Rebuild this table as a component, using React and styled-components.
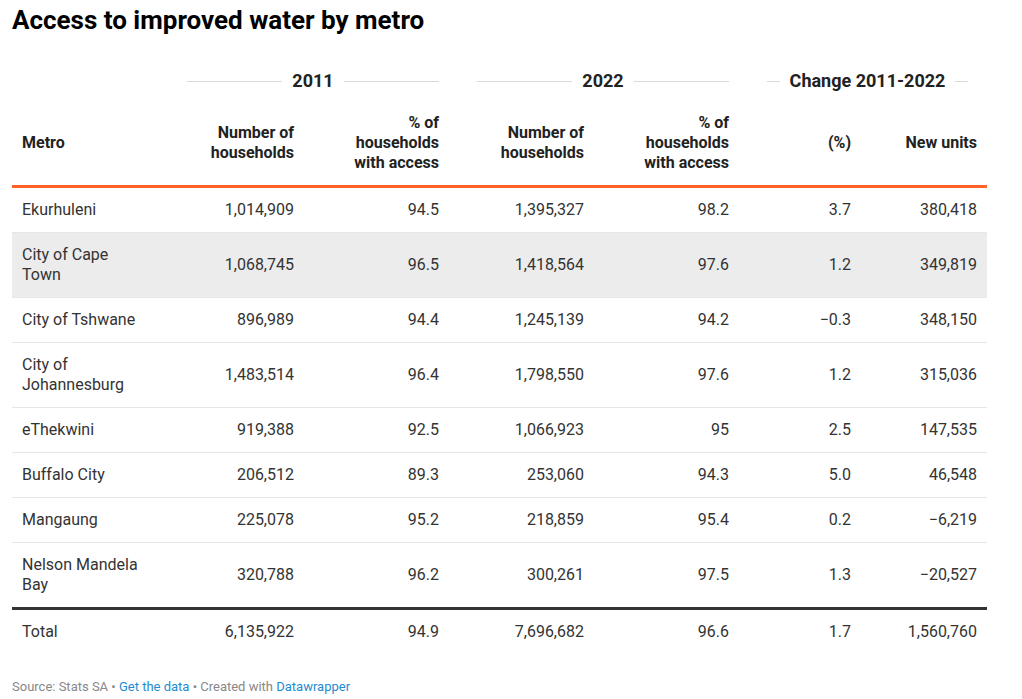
import styled, { createGlobalStyle } from "styled-components";

const GlobalStyle = createGlobalStyle`
  body {
    margin: 0;
    background: #fff;
    font-family: Roboto, "Liberation Sans", Arial, sans-serif;
  }
`;

const rows = [
  ["Ekurhuleni", "1,014,909", "94.5", "1,395,327", "98.2", "3.7", "380,418"],
  ["City of Cape Town", "1,068,745", "96.5", "1,418,564", "97.6", "1.2", "349,819", true],
  ["City of Tshwane", "896,989", "94.4", "1,245,139", "94.2", "−0.3", "348,150"],
  ["City of Johannesburg", "1,483,514", "96.4", "1,798,550", "97.6", "1.2", "315,036"],
  ["eThekwini", "919,388", "92.5", "1,066,923", "95", "2.5", "147,535"],
  ["Buffalo City", "206,512", "89.3", "253,060", "94.3", "5.0", "46,548"],
  ["Mangaung", "225,078", "95.2", "218,859", "95.4", "0.2", "−6,219"],
  ["Nelson Mandela Bay", "320,788", "96.2", "300,261", "97.5", "1.3", "−20,527"],
];

const names = {
  "City of Cape Town": ["City of Cape", "Town"],
  "City of Johannesburg": ["City of", "Johannesburg"],
  "Nelson Mandela Bay": ["Nelson Mandela", "Bay"],
};

const App = () => {
  return (
    <Page>
      <GlobalStyle />
      <Title>Access to improved water by metro</Title>
      <Table>
        <colgroup>
          <col style={{ width: 147 }} />
          <col style={{ width: 145 }} />
          <col style={{ width: 145 }} />
          <col style={{ width: 145 }} />
          <col style={{ width: 145 }} />
          <col style={{ width: 122 }} />
          <col style={{ width: 126 }} />
        </colgroup>
        <thead>
          <tr>
            <GroupCell />
            <GroupCell colSpan={2}>
              <Group>
                <Rule />
                <span>2011</span>
                <Rule />
              </Group>
            </GroupCell>
            <GroupCell colSpan={2}>
              <Group>
                <Rule />
                <span>2022</span>
                <Rule />
              </Group>
            </GroupCell>
            <GroupCell colSpan={2} $last>
              <Group>
                <Rule />
                <span>Change 2011-2022</span>
                <Rule />
              </Group>
            </GroupCell>
          </tr>
          <HeadRow>
            <HeadCell $left>Metro</HeadCell>
            <HeadCell>
              Number of
              <br />
              households
            </HeadCell>
            <HeadCell>
              % of
              <br />
              households
              <br />
              with access
            </HeadCell>
            <HeadCell>
              Number of
              <br />
              households
            </HeadCell>
            <HeadCell>
              % of
              <br />
              households
              <br />
              with access
            </HeadCell>
            <HeadCell>(%)</HeadCell>
            <HeadCell>New units</HeadCell>
          </HeadRow>
        </thead>
        <tbody>
          {rows.map((r) => (
            <Row key={r[0]} $hover={r[7]}>
              <Cell $left>
                {names[r[0]] ? (
                  <>
                    {names[r[0]][0]}
                    <br />
                    {names[r[0]][1]}
                  </>
                ) : (
                  r[0]
                )}
              </Cell>
              {r.slice(1, 7).map((v, i) => (
                <Cell key={i}>{v}</Cell>
              ))}
            </Row>
          ))}
        </tbody>
        <tfoot>
          <TotalRow>
            <Cell $left>Total</Cell>
            <Cell>6,135,922</Cell>
            <Cell>94.9</Cell>
            <Cell>7,696,682</Cell>
            <Cell>96.6</Cell>
            <Cell>1.7</Cell>
            <Cell>1,560,760</Cell>
          </TotalRow>
        </tfoot>
      </Table>
      <Footer>
        Source: Stats SA • <Link>Get the data</Link> • Created with{" "}
        <Link>Datawrapper</Link>
      </Footer>
    </Page>
  );
};

const Page = styled.div`
  width: 975px;
  padding: 4px 0 0 12px;
  color: #333;
`;

const Title = styled.h1`
  margin: 0;
  font-size: 26px;
  line-height: 32px;
  font-weight: 700;
  color: #000;
`;

const Table = styled.table`
  width: 975px;
  margin-top: 34px;
  border-collapse: collapse;
  table-layout: fixed;
  font-size: 16px;
  line-height: 20px;
  font-variant-numeric: tabular-nums;
`;

const GroupCell = styled.th`
  padding: 0 ${(p) => (p.$last ? "19px" : "10px")} 0 28px;
  font-size: 18px;
  line-height: 22px;
  font-weight: 700;
  color: #222;
  vertical-align: middle;
`;

const Group = styled.div`
  display: flex;
  align-items: center;
  gap: 10px;
  white-space: nowrap;
`;

const Rule = styled.div`
  flex: 1;
  height: 1px;
  background: #d9d9d9;
`;

const HeadRow = styled.tr`
  border-bottom: 3px solid #ff6126;
`;

const HeadCell = styled.th`
  padding: 21px 10px 12px;
  font-weight: 700;
  color: #222;
  text-align: ${(p) => (p.$left ? "left" : "right")};
  vertical-align: middle;
`;

const Row = styled.tr`
  background: ${(p) => (p.$hover ? "#ececec" : "#fff")};
  border-bottom: 1px solid #e6e6e6;

  &:last-child {
    border-bottom: none;
  }
`;

const TotalRow = styled.tr`
  border-top: 3px solid #333;
`;

const Cell = styled.td`
  padding: 12px 10px;
  text-align: ${(p) => (p.$left ? "left" : "right")};
  vertical-align: middle;
  color: #333;
`;

const Footer = styled.div`
  margin-top: 24px;
  font-size: 13px;
  line-height: 17px;
  color: #888;
`;

const Link = styled.span`
  color: #1f8bd1;
`;

export default App;
